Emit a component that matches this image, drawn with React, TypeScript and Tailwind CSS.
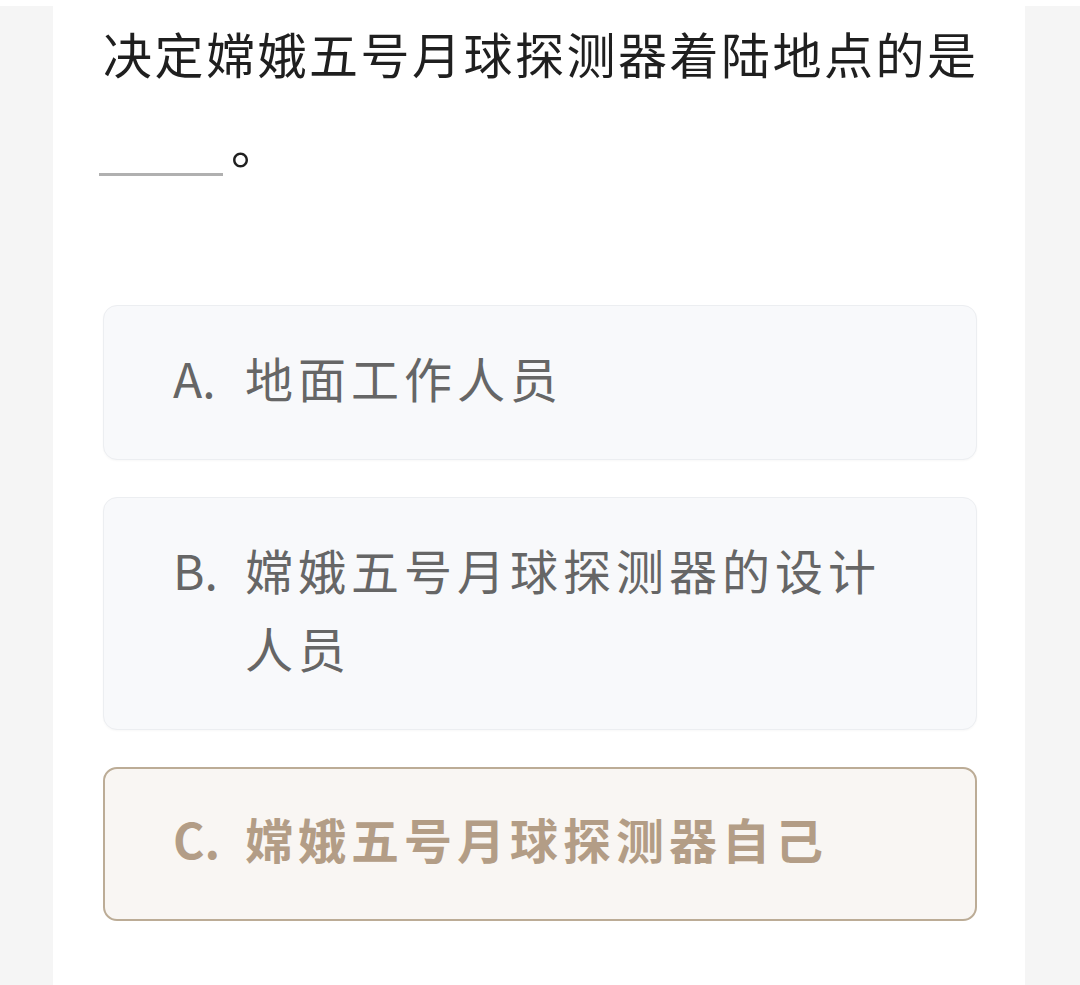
const options = [
  { key: 'A', text: '地面工作人员', picked: false },
  { key: 'B', text: '嫦娥五号月球探测器的设计人员', picked: false },
  { key: 'C', text: '嫦娥五号月球探测器自己', picked: true },
]

const font = { fontFamily: '"Noto Sans CJK SC", "Noto Sans", sans-serif' }

export default function App() {
  return (
    <div className="min-h-[985px] w-[1080px] bg-white flex" style={font}>
      <div className="w-[53px] mt-[6px] bg-[#f5f5f5]" />
      <div className="flex-1 bg-white pl-[50px] pr-[48px]">
        <h1 className="text-[49px] leading-[90px] tracking-[2.5px] text-[#1f1f1f] font-normal pt-[8px] -mr-[20px] break-all">
          决定嫦娥五号月球探测器着陆地点的是
          <span className="inline-block w-[124px] h-[52px] border-b-[3px] border-[#b0b0b0] align-[-12px] mr-[8px] -ml-[4px]" />
          。
        </h1>

        <div className="mt-[117px] flex flex-col gap-[37px]">
          {options.map((o) => (
            <div
              key={o.key}
              className={
                o.picked
                  ? 'flex rounded-[14px] border-2 border-[#bcac96] bg-[#f9f6f3] pl-[68px] pr-[70px] pt-[30px] pb-[42px] text-[#b39d86] font-bold'
                  : 'flex rounded-[14px] border border-[#eceef1] bg-[#f8f9fb] shadow-[0_1px_2px_rgba(0,0,0,0.03)] pl-[69px] pr-[70px] pt-[32px] pb-[43px] text-[#666666]'
              }
            >
              <span className="text-[48px] leading-[78px] shrink-0 w-[72px]">{o.key}.</span>
              <span className="text-[48px] leading-[78px] tracking-[5px]">{o.text}</span>
            </div>
          ))}
        </div>
      </div>
      <div className="w-[55px] mt-[6px] bg-[#f5f5f5]" />
    </div>
  )
}
